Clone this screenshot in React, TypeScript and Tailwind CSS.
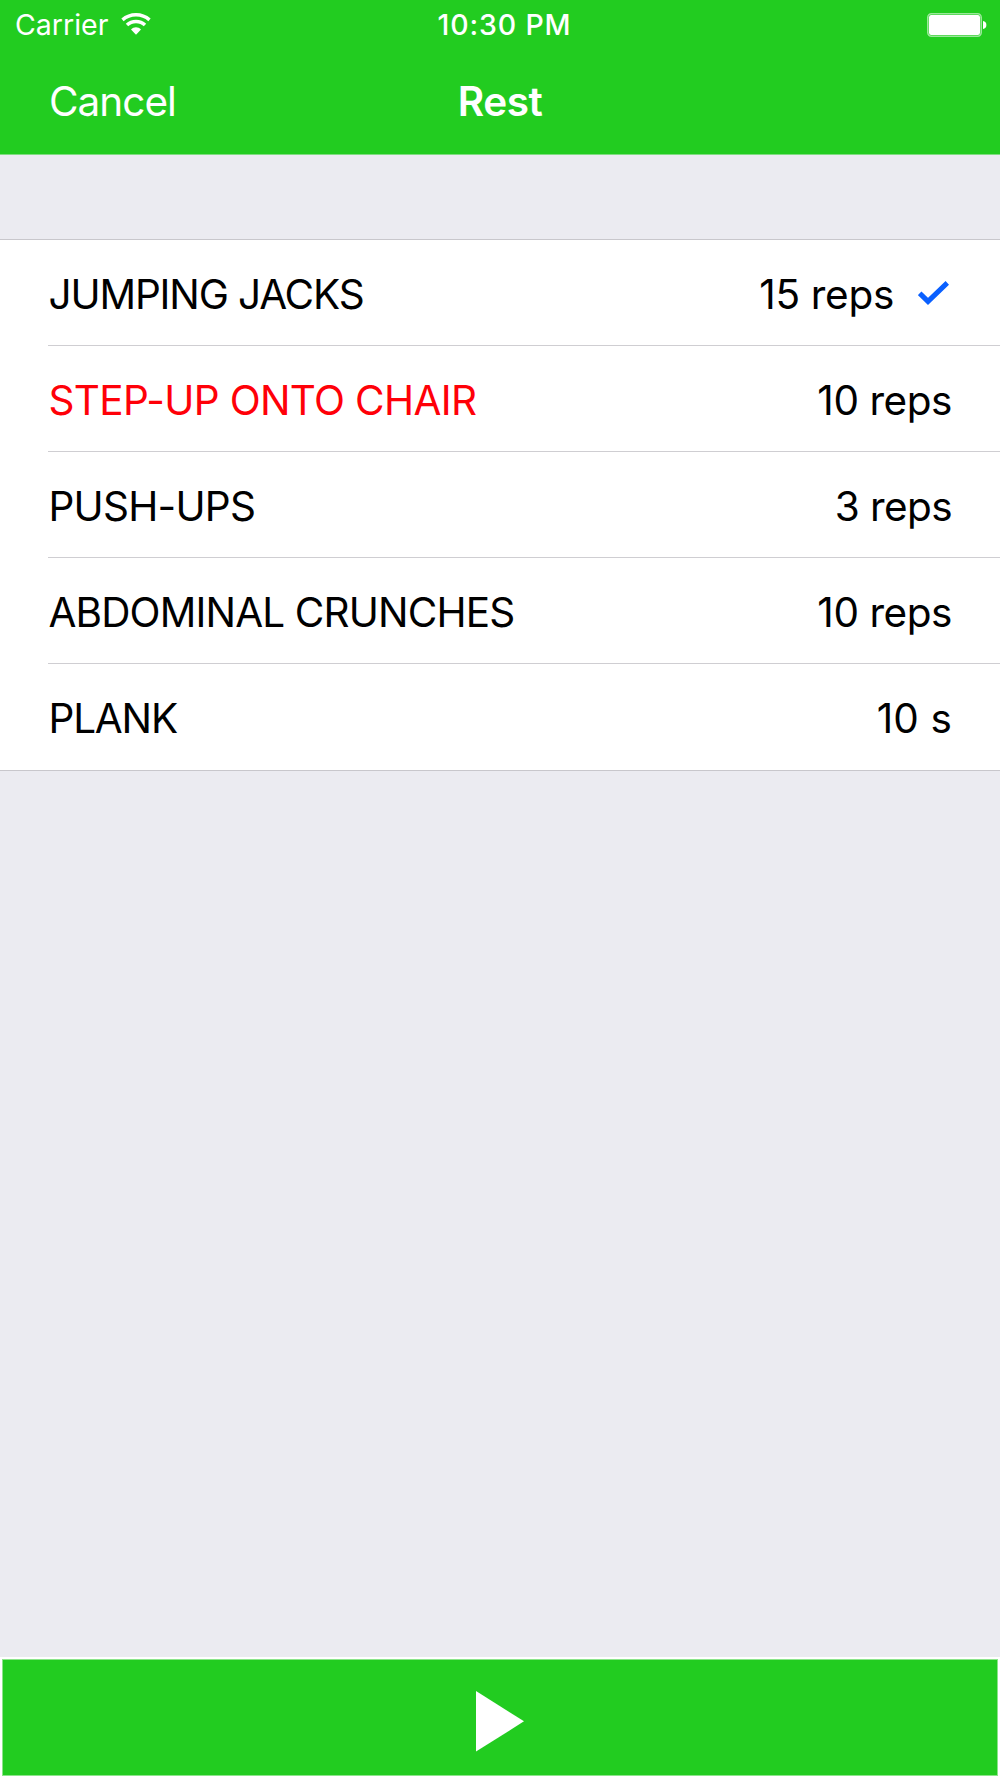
import React from 'react';
import { clsx } from 'clsx';

// ─── Data ─────────────────────────────────────────────────────────

type Exercise = {
  name: string;
  amount: string;
  nameTracking: string;
  amountTracking: string;
  done?: boolean;
  current?: boolean;
};

const EXERCISES: Exercise[] = [
  { name: 'JUMPING JACKS', amount: '15 reps', nameTracking: 'tracking-[-1.15px]', amountTracking: 'tracking-[-0.3px]', done: true },
  { name: 'STEP-UP ONTO CHAIR', amount: '10 reps', nameTracking: 'tracking-[-0.67px]', amountTracking: 'tracking-[-0.45px]', current: true },
  { name: 'PUSH-UPS', amount: '3 reps', nameTracking: 'tracking-[-0.75px]', amountTracking: 'tracking-[-0.6px]' },
  { name: 'ABDOMINAL CRUNCHES', amount: '10 reps', nameTracking: 'tracking-[-0.85px]', amountTracking: 'tracking-[-0.45px]' },
  { name: 'PLANK', amount: '10 s', nameTracking: 'tracking-[-1.2px]', amountTracking: 'tracking-[0.1px]' },
];

// ─── Icons ────────────────────────────────────────────────────────

const WifiIcon = () => (
  <svg className="mb-[3px]" width="30" height="22" viewBox="0 0 30 22" fill="none" aria-hidden="true">
    <path d="M1.5 6.9A20.5 20.5 0 0 1 28.5 6.9" stroke="white" strokeWidth="3.5" />
    <path d="M6 12.1A12.8 12.8 0 0 1 24 12.1" stroke="white" strokeWidth="3.5" />
    <path d="M10 16.5C12.8 13.6 17.2 13.6 20 16.5L15 21.7Z" fill="white" />
  </svg>
);

const BatteryIcon = () => (
  <svg className="mb-0.5" width="60" height="24" viewBox="0 0 60 24" aria-hidden="true">
    <rect x="0.8" y="0.8" width="53.4" height="22.4" rx="3.6" fill="#22cc20" stroke="white" strokeOpacity="0.55" strokeWidth="1.6" />
    <rect x="2" y="2" width="51" height="20" rx="2.2" fill="white" />
    <path d="M56 8C58.2 8.3 59.4 9.8 59.4 12S58.2 15.7 56 16Z" fill="white" />
  </svg>
);

const CheckIcon = () => (
  <svg className="mb-[5px]" width="31" height="24" viewBox="0 0 31 24" fill="none" aria-hidden="true">
    <path d="M1.7 12.3L10 20.4L29.3 1.9" stroke="#0a60ff" strokeWidth="5" />
  </svg>
);

const PlayIcon = () => (
  <svg width="48" height="61" viewBox="0 0 48 61" aria-hidden="true">
    <path d="M0 0L48 30.3L0 60.6Z" fill="white" />
  </svg>
);

// ─── Sections ─────────────────────────────────────────────────────

const StatusBar = () => (
  <div className="grid h-12 grid-cols-3 items-center pt-[3px] pr-[13px] pl-[15px] text-[28.5px] leading-none">
    <div className="flex items-center gap-[13px]">
      <span>Carrier</span>
      <WifiIcon />
    </div>
    <span className="pl-[7px] text-center font-medium tracking-[0.85px]">10:30 PM</span>
    <div className="flex justify-end">
      <BatteryIcon />
    </div>
  </div>
);

const NavBar = () => (
  <div className="grid h-[106px] grid-cols-3 items-center px-[49px] pt-[3px] text-[40.5px] leading-none">
    <button className="justify-self-start tracking-[-1px]">Cancel</button>
    <h1 className="text-center font-semibold tracking-[-0.5px]">Rest</h1>
  </div>
);

const ExerciseRow = ({ exercise, last }: { exercise: Exercise; last: boolean }) => (
  <li className="h-[106px] pl-12">
    <div
      className={clsx(
        'flex h-full items-center justify-between border-b pt-[5px] pl-[0.5px]',
        exercise.done ? 'pr-[51px]' : 'pr-12',
        last ? 'border-transparent' : 'border-[#cfced2]',
      )}
    >
      <span className={clsx(exercise.nameTracking, exercise.current ? 'text-[#ff0008]' : 'text-black')}>
        {exercise.name}
      </span>
      <span className="flex items-center gap-6">
        <span className={exercise.amountTracking}>{exercise.amount}</span>
        {exercise.done && <CheckIcon />}
      </span>
    </div>
  </li>
);

// ─── Screen ───────────────────────────────────────────────────────

const App: React.FC = () => (
  <main className="flex h-[1778px] w-[1000px] flex-col bg-[#ebebf1] font-['Inter',sans-serif]">
    <header className="h-[155px] border-b border-[#7fdd80] bg-[#22cc20] text-white">
      <StatusBar />
      <NavBar />
    </header>

    <ul className="mt-[84px] border-y border-[#c8c7cc] bg-white text-[40.5px] leading-none">
      {EXERCISES.map((exercise, i) => (
        <ExerciseRow key={exercise.name} exercise={exercise} last={i === EXERCISES.length - 1} />
      ))}
    </ul>

    <footer className="mt-auto h-[121px] bg-white p-0.5">
      <button
        className="flex h-full w-full items-center justify-center border border-[#8be58a] bg-[#22cc20] pt-[7px]"
        aria-label="Start"
      >
        <PlayIcon />
      </button>
    </footer>
  </main>
);

export default App;
